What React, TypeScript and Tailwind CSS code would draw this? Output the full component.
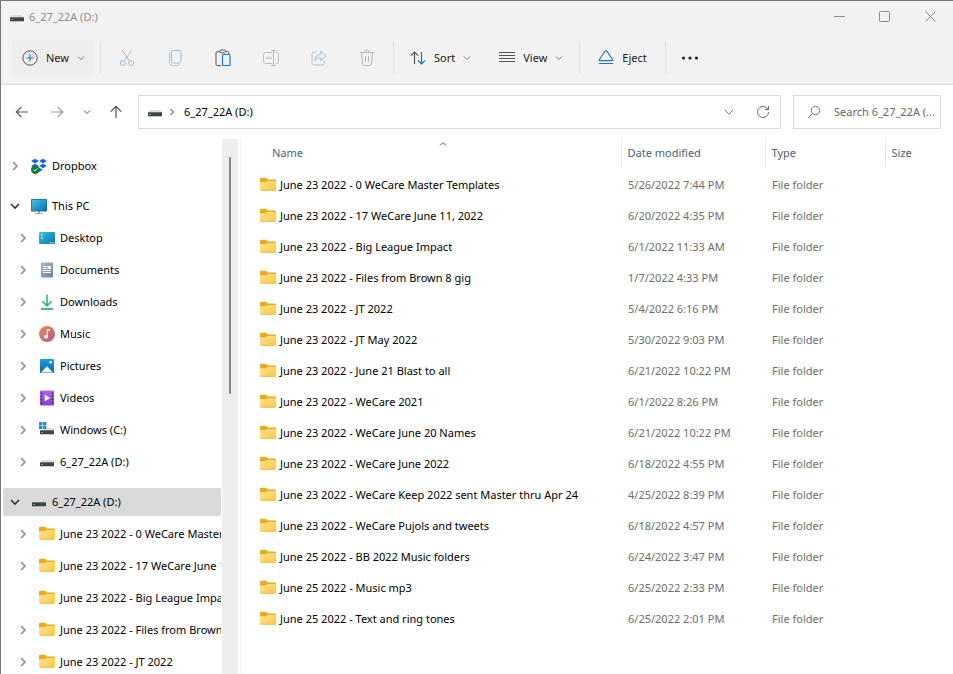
import type { ReactNode } from 'react';

type IconProps = { className?: string };

const folders = [
  { name: 'June 23 2022 - 0 WeCare Master Templates', modified: '5/26/2022 7:44 PM' },
  { name: 'June 23 2022 - 17 WeCare June 11, 2022', modified: '6/20/2022 4:35 PM' },
  { name: 'June 23 2022 - Big League Impact', modified: '6/1/2022 11:33 AM' },
  { name: 'June 23 2022 - Files from Brown 8 gig', modified: '1/7/2022 4:33 PM' },
  { name: 'June 23 2022 - JT 2022', modified: '5/4/2022 6:16 PM' },
  { name: 'June 23 2022 - JT May 2022', modified: '5/30/2022 9:03 PM' },
  { name: 'June 23 2022 - June 21 Blast to all', modified: '6/21/2022 10:22 PM' },
  { name: 'June 23 2022 - WeCare 2021', modified: '6/1/2022 8:26 PM' },
  { name: 'June 23 2022 - WeCare June 20 Names', modified: '6/21/2022 10:22 PM' },
  { name: 'June 23 2022 - WeCare June 2022', modified: '6/18/2022 4:55 PM' },
  { name: 'June 23 2022 - WeCare Keep 2022 sent Master thru Apr 24', modified: '4/25/2022 8:39 PM' },
  { name: 'June 23 2022 - WeCare Pujols and tweets', modified: '6/18/2022 4:57 PM' },
  { name: 'June 25 2022 - BB 2022 Music folders', modified: '6/24/2022 3:47 PM' },
  { name: 'June 25 2022 - Music mp3', modified: '6/25/2022 2:33 PM' },
  { name: 'June 25 2022 - Text and ring tones', modified: '6/25/2022 2:01 PM' },
];

function Chevron({ className = '' }: IconProps) {
  return (
    <svg viewBox="0 0 8 8" className={`size-2 shrink-0 ${className}`} fill="none" stroke="currentColor">
      <path d="M1 2.5 4 5.5 7 2.5" />
    </svg>
  );
}

function FolderIcon() {
  return (
    <svg viewBox="0 0 16 16" className="size-4 shrink-0">
      <defs>
        <linearGradient id="folder" x1="0" y1="0" x2="1" y2="1">
          <stop offset="0" stopColor="#ffe394" />
          <stop offset="1" stopColor="#fbc93d" />
        </linearGradient>
      </defs>
      <path d="M0 2A1.3 1.3 0 0 1 1.300.7h4.200c.5 0 .8.2 1.100.5L8 2.500h6.800A1.200 1.200 0 0 1 16 3.700V8H0z" fill="#e9aa1c" />
      <path d="M0 5.200h5.400c.5 0 .8-.1 1.100-.4L7.500 3.900h7.300A1.200 1.200 0 0 1 16 5.100v7.100a1.300 1.300 0 0 1-1.300 1.300H1.300A1.300 1.300 0 0 1 0 12.200z" fill="url(#folder)" />
      <path d="M.4 12.800c.2.400.5.600.9.600h13.400c.4 0 .7-.2.9-.6" fill="none" stroke="#e5b23a" strokeWidth=".7" />
    </svg>
  );
}

function DriveIcon() {
  return (
    <svg viewBox="0 0 16 16" className="size-4 shrink-0">
      <path d="M3 6h10l1.800 2.500H1.200z" fill="#dcdcdc" />
      <path d="M1 8.300h14v4H1z" fill="#3f4442" />
      <path d="M1 8.300h14v.8H1z" fill="#6b706e" />
      <path d="M2.300 10h1.700v1H2.300z" fill="#4fd67a" />
    </svg>
  );
}

function WindowsDriveIcon() {
  return (
    <svg viewBox="0 0 16 16" className="size-4 shrink-0">
      <path d="M6 6h7.500l1.500 2H5z" fill="#dcdcdc" />
      <path d="M1 8.300h14v4H1z" fill="#3f4442" />
      <path d="M2.300 10h1.700v1H2.300z" fill="#4fd67a" />
      <path d="M0 0h3.400v3.200H0zM4 0h3.400v3.200H4zM0 3.800h3.400V7H0zM4 3.800h3.400V7H4z" fill="#1a92d4" />
    </svg>
  );
}

function DropboxIcon() {
  return (
    <svg viewBox="0 0 16 16" className="size-4 shrink-0">
      <path d="M4 .8 7.800 3.100 4 5.400.2 3.100zM12 .8l3.800 2.300L12 5.400 8.200 3.100zM4 5.700 7.800 8 4 10.300.2 8zM12 5.700 15.800 8 12 10.300 8.200 8zM8 9.400l3.800 2.300L8 14l-3.800-2.300z" fill="#0d63f3" />
      <circle cx="4.300" cy="11.600" r="4.300" fill="#0f7c41" />
      <path d="m2.500 11.700 1.300 1.300 2.500-2.600" fill="none" stroke="#fff" />
    </svg>
  );
}

function PcIcon() {
  return (
    <svg viewBox="0 0 16 16" className="size-4 shrink-0">
      <defs>
        <linearGradient id="screen" x1="0" y1="0" x2="1" y2="1">
          <stop offset="0" stopColor="#3ac8e8" />
          <stop offset="1" stopColor="#0d69b4" />
        </linearGradient>
      </defs>
      <path d="M7 13h2v2h3v.9H4V15h3z" fill="#9aa7b3" />
      <rect y="1" width="16" height="12.500" rx="1" fill="#176a9c" />
      <rect x=".7" y="1.700" width="14.600" height="11.100" rx=".4" fill="url(#screen)" />
    </svg>
  );
}

function DesktopIcon() {
  return (
    <svg viewBox="0 0 16 16" className="size-4 shrink-0">
      <defs>
        <linearGradient id="desktop" x1="0" y1="0" x2="1" y2="1">
          <stop offset="0" stopColor="#36c5e0" />
          <stop offset="1" stopColor="#0b71b8" />
        </linearGradient>
      </defs>
      <rect y="2" width="16" height="12" rx="1.200" fill="url(#desktop)" />
      <path d="M2 4h1.600v1.500H2zM2 7.200h1.600v1.500H2zM10.500 12.200H12v1h-1.500zM13 12.200h1.500v1H13z" fill="#e4f8ff" />
    </svg>
  );
}

function DocumentIcon() {
  return (
    <svg viewBox="0 0 16 16" className="size-4 shrink-0">
      <defs>
        <linearGradient id="doc" x1="0" y1="0" x2="1" y2="1">
          <stop offset="0" stopColor="#a9b9cd" />
          <stop offset="1" stopColor="#708199" />
        </linearGradient>
      </defs>
      <rect x="2" y=".5" width="12" height="15" rx="1" fill="url(#doc)" />
      <path d="M4 4.500h3.500M4 6.500h3.500M4 8.500h8M4 10.500h8" stroke="#fff" />
      <path d="M8.500 4H12v3H8.500z" fill="#fff" />
    </svg>
  );
}

function DownloadIcon() {
  return (
    <svg viewBox="0 0 16 16" className="size-4 shrink-0" fill="none" strokeWidth="1.600">
      <path d="M8 .5v11M3.300 7.200 8 11.800l4.700-4.600" stroke="#29b58d" />
      <path d="M2 15h12" stroke="#129a74" />
    </svg>
  );
}

function MusicIcon() {
  return (
    <svg viewBox="0 0 16 16" className="size-4 shrink-0">
      <defs>
        <linearGradient id="music" x1="0" y1="0" x2="1" y2="1">
          <stop offset="0" stopColor="#ec8a56" />
          <stop offset="1" stopColor="#b25a88" />
        </linearGradient>
      </defs>
      <circle cx="8" cy="8" r="8" fill="url(#music)" />
      <path d="M7.800 3.200h3v1.900H8.900v5.300H7.800z" fill="#fff" />
      <circle cx="7.100" cy="10.700" r="1.900" fill="#fff" />
    </svg>
  );
}

function PicturesIcon() {
  return (
    <svg viewBox="0 0 16 16" className="size-4 shrink-0">
      <defs>
        <linearGradient id="pics" x1="0" y1="0" x2="0" y2="1">
          <stop offset="0" stopColor="#1c9de0" />
          <stop offset="1" stopColor="#0b62b4" />
        </linearGradient>
      </defs>
      <rect x="1" y="1" width="14" height="14" rx="1" fill="url(#pics)" />
      <path d="m2 14.500 5.300-5.600c.4-.4 1-.4 1.400 0l5.300 5.600z" fill="#f4fbff" />
      <circle cx="11.600" cy="4.300" r="1.200" fill="#fff" />
    </svg>
  );
}

function VideosIcon() {
  return (
    <svg viewBox="0 0 16 16" className="size-4 shrink-0">
      <defs>
        <linearGradient id="video" x1="0" y1="0" x2="0" y2="1">
          <stop offset="0" stopColor="#b067e6" />
          <stop offset="1" stopColor="#8042d3" />
        </linearGradient>
      </defs>
      <rect x="1" y=".5" width="14" height="15" rx="1" fill="url(#video)" />
      <path d="M1.800 2.500h1.500V4H1.800zM1.800 5.600h1.500v1.500H1.800zM1.800 8.800h1.500v1.500H1.800zM1.800 12h1.500v1.500H1.800zM12.700 2.500h1.500V4h-1.500zM12.700 5.600h1.500v1.500h-1.500zM12.700 8.800h1.500v1.500h-1.500zM12.700 12h1.500v1.500h-1.500z" fill="#45208a" />
      <path d="m5.700 4.800 5.500 3.200-5.500 3.200z" fill="#fff" />
    </svg>
  );
}

type TreeItem = { label: string; icon: ReactNode; state?: 'open' | 'leaf'; selected?: boolean; nested?: boolean };

const groups: TreeItem[][] = [
  [{ label: 'Dropbox', icon: <DropboxIcon /> }],
  [
    { label: 'This PC', icon: <PcIcon />, state: 'open' },
    { label: 'Desktop', icon: <DesktopIcon />, nested: true },
    { label: 'Documents', icon: <DocumentIcon />, nested: true },
    { label: 'Downloads', icon: <DownloadIcon />, nested: true },
    { label: 'Music', icon: <MusicIcon />, nested: true },
    { label: 'Pictures', icon: <PicturesIcon />, nested: true },
    { label: 'Videos', icon: <VideosIcon />, nested: true },
    { label: 'Windows (C:)', icon: <WindowsDriveIcon />, nested: true },
    { label: '6_27_22A (D:)', icon: <DriveIcon />, nested: true },
  ],
  [
    { label: '6_27_22A (D:)', icon: <DriveIcon />, state: 'open', selected: true },
    { label: folders[0].name, icon: <FolderIcon />, nested: true },
    { label: folders[1].name, icon: <FolderIcon />, nested: true },
    { label: folders[2].name, icon: <FolderIcon />, nested: true, state: 'leaf' },
    { label: folders[3].name, icon: <FolderIcon />, nested: true },
    { label: folders[4].name, icon: <FolderIcon />, nested: true },
  ],
];

function TreeRow({ item }: { item: TreeItem }) {
  return (
    <li>
      <button
        className={`flex h-7 w-full items-center overflow-hidden rounded-xs text-left whitespace-nowrap ${item.nested ? 'pl-[15px]' : 'pl-[7px]'} ${item.selected ? 'bg-[#d9d9d9]' : ''}`}
      >
        <span className="flex w-[21px] shrink-0">
          {item.state !== 'leaf' && (
            <svg
              viewBox="0 0 10 10"
              className={`size-[10px] ${item.state === 'open' ? 'rotate-90 text-[#333]' : 'text-[#8c8c8c]'}`}
              fill="none"
              stroke="currentColor"
              strokeWidth="1.600"
            >
              <path d="M3 1 7 5 3 9" />
            </svg>
          )}
        </span>
        {item.icon}
        <span className="ml-[5px]">{item.label}</span>
      </button>
    </li>
  );
}

function Separator() {
  return <span className="h-8 w-px shrink-0 bg-[#e0e0e0]" />;
}

function ToolIcon({ label, children }: { label: string; children: ReactNode }) {
  return (
    <button aria-label={label} className="flex h-9 w-12 shrink-0 items-center justify-center">
      <svg viewBox="0 0 16 18" className="h-[18px] w-4" fill="none">
        {children}
      </svg>
    </button>
  );
}

function Toolbar() {
  return (
    <div className="flex h-[53px] items-center border-b border-[#dcdcdc] pl-[11px]">
      <button className="flex h-9 w-[82px] shrink-0 items-center gap-2 rounded bg-[#eee] pl-[10px]">
        <svg viewBox="0 0 16 16" className="size-4" fill="none">
          <circle cx="8" cy="8" r="7.200" stroke="#555" />
          <path d="M8 4.500v7M4.500 8h7" stroke="#1877c9" strokeWidth="1.200" />
        </svg>
        New
        <Chevron className="text-[#777]" />
      </button>
      <div className="flex items-center gap-[2px] pl-[6px]">
        <Separator />
        <div className="flex">
          <ToolIcon label="Cut">
            <path d="m3.200 1 7.200 11M12.800 1 5.600 12" stroke="#b8b8b8" />
            <circle cx="3.800" cy="14" r="2.500" stroke="#92bfe4" />
            <circle cx="12.200" cy="14" r="2.500" stroke="#92bfe4" />
          </ToolIcon>
          <ToolIcon label="Copy">
            <rect x="4.500" y="1.500" width="9.500" height="12.500" rx="1.800" stroke="#92bfe4" />
            <path d="M4 3.500c-1 .2-1.500 1-1.500 2v8.300c0 1.500 1 2.700 2.500 2.700h5c1 0 1.800-.5 2.100-1.500" stroke="#b6c4d0" />
          </ToolIcon>
          <ToolIcon label="Paste">
            <path d="M5 2.500H2.300c-.8 0-1.300.5-1.300 1.300v11.400c0 .8.500 1.300 1.300 1.300H6M11 2.500h1.500c.8 0 1.300.5 1.300 1.300V5" stroke="#555" />
            <rect x="4.800" y="1" width="5.800" height="2.800" rx="1.200" stroke="#555" />
            <rect x="7.500" y="5.500" width="7.500" height="11" rx="1" stroke="#1877c9" strokeWidth="1.200" />
          </ToolIcon>
          <ToolIcon label="Rename">
            <path d="M9 3.500H2.500c-1.200 0-2 .8-2 2v7c0 1.200.8 2 2 2H9M12.500 3.500h1c1.200 0 2 .8 2 2v7c0 1.200-.8 2-2 2h-1" stroke="#b8bcc0" />
            <path d="M3 9h6M10.500 1.500v15M8.500 1.500h4M8.500 16.500h4" stroke="#92bfe4" />
          </ToolIcon>
          <ToolIcon label="Share">
            <path d="M5.500 3H3.200C1.800 3 1 3.800 1 5.200v8.600C1 15.200 1.800 16 3.200 16h8.100c1.400 0 2.200-.8 2.200-2.200V12" stroke="#b8bcc0" />
            <path d="M9.800 2v3C6 5.300 4.200 7.800 3.800 11.500c1.600-2 3.400-2.700 6-2.700v3L15 7z" stroke="#92bfe4" strokeLinejoin="round" />
          </ToolIcon>
          <ToolIcon label="Delete">
            <path d="M1 3.500h14M5.700 3.500c0-1.500.9-2.300 2.300-2.300s2.300.8 2.300 2.300M2.500 3.500l1 11.300c.1 1 .8 1.700 1.800 1.700h5.400c1 0 1.700-.7 1.800-1.700l1-11.300M6.500 7v5.500M9.500 7v5.500" stroke="#b5b5b5" />
          </ToolIcon>
        </div>
        <Separator />
      </div>
      <div className="flex items-center gap-3 px-2">
        <button className="flex h-9 items-center gap-2 px-2">
          <svg viewBox="0 0 16 16" className="size-4" fill="none" strokeWidth="1.200">
            <path d="M4.500 14V2M.8 5.700 4.500 2l3.700 3.700" stroke="#555" />
            <path d="M11.500 2v12M7.800 10.300l3.700 3.700 3.700-3.700" stroke="#1877c9" />
          </svg>
          Sort
          <Chevron className="text-[#777]" />
        </button>
        <button className="flex h-9 items-center gap-2 px-2">
          <svg viewBox="0 0 16 16" className="size-4" fill="none" stroke="#555">
            <path d="M0 2.500h16M0 5.500h16M0 8.500h16M0 11.500h16" />
          </svg>
          View
          <Chevron className="text-[#777]" />
        </button>
      </div>
      <Separator />
      <button className="mx-[10px] flex h-9 items-center gap-2 px-2">
        <svg viewBox="0 0 16 16" className="size-4" fill="none" stroke="#1877c9" strokeWidth="1.200">
          <path d="M7.300 1 1.400 9.500c-.3.600-.1 1.100.5 1.100h12.200c.6 0 .8-.5.5-1.100L8.700 1c-.4-.5-1-.5-1.400 0zM1 13.500h14" />
        </svg>
        Eject
      </button>
      <Separator />
      <button aria-label="See more" className="flex h-9 w-12 items-center justify-center">
        <svg viewBox="0 0 18 4" className="h-1 w-[18px]" fill="#222">
          <circle cx="2.500" cy="2" r="1.600" />
          <circle cx="9" cy="2" r="1.600" />
          <circle cx="15.500" cy="2" r="1.600" />
        </svg>
      </button>
    </div>
  );
}

function AddressBar() {
  return (
    <div className="flex h-[54px] shrink-0 items-center pr-3 pl-[13px]">
      <nav className="flex w-[124px] shrink-0 items-center text-[#555]">
        <button aria-label="Back" className="mr-[19px]">
          <svg viewBox="0 0 16 16" className="size-4" fill="none" stroke="currentColor" strokeWidth="1.200">
            <path d="M14 8H2.500M7.500 2.800 2.300 8l5.200 5.200" />
          </svg>
        </button>
        <button aria-label="Forward" className="mr-[18px] text-[#999]">
          <svg viewBox="0 0 16 16" className="size-4" fill="none" stroke="currentColor" strokeWidth="1.200">
            <path d="M2 8h11.500M8.500 2.800 13.700 8l-5.200 5.200" />
          </svg>
        </button>
        <button aria-label="Recent locations" className="mr-[17px]">
          <Chevron />
        </button>
        <button aria-label="Up">
          <svg viewBox="0 0 16 16" className="size-4" fill="none" stroke="currentColor" strokeWidth="1.200">
            <path d="M8 14V2.500M2.800 7.500 8 2.300l5.200 5.200" />
          </svg>
        </button>
      </nav>
      <div className="flex h-[34px] flex-1 items-center border border-[#d9d9d9] pr-[10px] pl-2">
        <DriveIcon />
        <Chevron className="mx-[5px] -rotate-90 text-[#333]" />
        <button className="ml-[3px] text-black">6_27_22A (D:)</button>
        <button aria-label="Previous locations" className="mr-[22px] ml-auto text-[#777]">
          <svg viewBox="0 0 10 10" className="size-[10px]" fill="none" stroke="currentColor">
            <path d="M1 3 5 7.200 9 3" />
          </svg>
        </button>
        <button aria-label="Refresh" className="text-[#666]">
          <svg viewBox="0 0 14 14" className="size-[14px]" fill="none" stroke="currentColor">
            <path d="M12.500 7a5.500 5.500 0 1 1-1.700-4l1.400 1.500M12.500 1v3.600H9" />
          </svg>
        </button>
      </div>
      <label className="ml-3 flex h-[34px] w-[148px] items-center border border-[#d9d9d9] pl-[13px] text-[#777]">
        <svg viewBox="0 0 14 14" className="mr-[13px] size-[14px] shrink-0" fill="none" stroke="currentColor">
          <circle cx="8.500" cy="5.500" r="4.200" />
          <path d="M5.500 8.500 1 13" />
        </svg>
        <input
          type="text"
          aria-label="Search"
          placeholder="Search 6_27_22A (..."
          className="w-full min-w-0 outline-none placeholder:text-[#666]"
        />
      </label>
    </div>
  );
}

function FileTable() {
  return (
    <table className="w-full table-fixed text-left whitespace-nowrap">
      <colgroup>
        <col className="w-[380px]" />
        <col className="w-[144px]" />
        <col className="w-[120px]" />
        <col />
      </colgroup>
      <thead className="text-[#4c607a]">
        <tr className="h-7">
          <th className="p-0 pl-[25px] font-normal">
            <button className="relative w-full pl-[6px] text-left">
              Name
              <Chevron className="absolute -top-[5px] left-1/2 -ml-1 rotate-180 text-[#555]" />
            </button>
          </th>
          <th className="border-l border-[#e5e5e5] p-0 pl-[6px] font-normal">Date modified</th>
          <th className="border-l border-[#e5e5e5] p-0 pl-[6px] font-normal">Type</th>
          <th className="border-l border-[#e5e5e5] p-0 pl-[6px] font-normal">Size</th>
        </tr>
      </thead>
      <tbody className="text-[#6d6d6d]">
        <tr className="h-[2px]" />
        {folders.map((folder) => (
          <tr key={folder.name} className="h-[31px]">
            <td className="p-0 pl-[19px] text-black">
              <a href="#" className="flex items-center gap-1">
                <FolderIcon />
                {folder.name}
              </a>
            </td>
            <td className="p-0 pl-[7px]">{folder.modified}</td>
            <td className="p-0 pl-[7px]">File folder</td>
            <td className="p-0" />
          </tr>
        ))}
      </tbody>
    </table>
  );
}

export default function App() {
  return (
    <div className="flex h-screen flex-col overflow-hidden border-t border-l border-[#777] bg-white font-['Noto_Sans','Open_Sans',sans-serif] text-[11px] leading-4 text-[#1a1a1a]">
      <header className="shrink-0 bg-[#f2f2f2]">
        <div className="flex h-[31px] items-center pl-2 text-[#8c8c8c]">
          <DriveIcon />
          <h1 className="ml-1 flex-1">6_27_22A (D:)</h1>
          <div className="flex h-full">
            <button aria-label="Minimize" className="flex w-[45px] items-center justify-center">
              <svg viewBox="0 0 11 11" className="size-[11px]" stroke="currentColor">
                <path d="M0 5.500h11" />
              </svg>
            </button>
            <button aria-label="Maximize" className="flex w-[45px] items-center justify-center">
              <svg viewBox="0 0 11 11" className="size-[11px]" fill="none" stroke="currentColor">
                <rect x=".5" y=".5" width="10" height="10" rx="1" />
              </svg>
            </button>
            <button aria-label="Close" className="flex w-[46px] items-center justify-center">
              <svg viewBox="0 0 11 11" className="size-[11px]" stroke="currentColor">
                <path d="m.5.5 10 10M10.500.5l-10 10" />
              </svg>
            </button>
          </div>
        </div>
        <Toolbar />
      </header>
      <AddressBar />
      <div className="flex min-h-0 flex-1">
        <aside className="flex w-[240px] shrink-0 border-r border-[#f3f3f3]">
          <nav className="min-w-0 flex-1 overflow-hidden pt-[13px] pr-px pl-[2px] text-black">
            <div className="flex flex-col gap-3">
              {groups.map((items, i) => (
                <ul key={i} className="flex flex-col gap-1">
                  {items.map((item) => (
                    <TreeRow key={item.label} item={item} />
                  ))}
                </ul>
              ))}
            </div>
          </nav>
          <div className="mr-[2px] flex w-4 justify-center bg-[#eee] pt-[18px]">
            <span className="h-[237px] w-[2px] rounded-full bg-[#868686]" />
          </div>
        </aside>
        <main className="min-w-0 flex-1">
          <FileTable />
        </main>
      </div>
    </div>
  );
}
